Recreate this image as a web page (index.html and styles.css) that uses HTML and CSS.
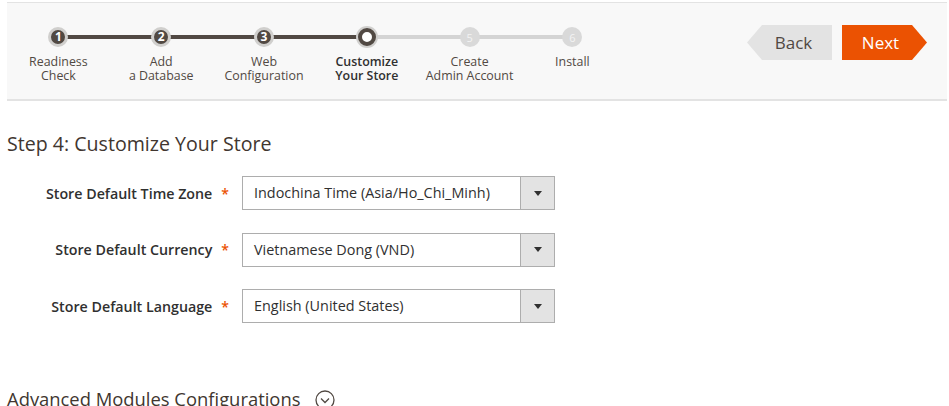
FILE: index.html
```html
<!DOCTYPE html>
<html lang="en">
<head>
<meta charset="utf-8">
<title>Step 4: Customize Your Store</title>
<link rel="stylesheet" href="styles.css">
</head>
<body>
<div class="page">
  <header class="nav-bar">
    <ol class="steps">
      <li class="step done"><span class="dot">1</span><span class="label">Readiness<br>Check</span></li>
      <li class="step done"><span class="dot">2</span><span class="label">Add<br>a Database</span></li>
      <li class="step done"><span class="dot">3</span><span class="label">Web<br>Configuration</span></li>
      <li class="step active"><span class="dot"></span><span class="label">Customize<br>Your Store</span></li>
      <li class="step todo"><span class="dot">5</span><span class="label">Create<br>Admin Account</span></li>
      <li class="step todo"><span class="dot">6</span><span class="label">Install</span></li>
    </ol>
    <div class="buttons">
      <button class="btn btn-back">Back</button>
      <button class="btn btn-next">Next</button>
    </div>
  </header>

  <h2 class="title">Step 4: Customize Your Store</h2>

  <form class="form">
    <div class="row">
      <label class="field-label">Store Default Time Zone<span class="req">*</span></label>
      <div class="select"><span class="value">Indochina Time (Asia/Ho_Chi_Minh)</span><span class="arrow"></span></div>
    </div>
    <div class="row">
      <label class="field-label">Store Default Currency<span class="req">*</span></label>
      <div class="select"><span class="value">Vietnamese Dong (VND)</span><span class="arrow"></span></div>
    </div>
    <div class="row">
      <label class="field-label">Store Default Language<span class="req">*</span></label>
      <div class="select"><span class="value">English (United States)</span><span class="arrow"></span></div>
    </div>
  </form>

  <h2 class="title advanced">Advanced Modules Configurations
    <svg class="chev" width="22" height="22" viewBox="0 0 22 22"><circle cx="11" cy="11" r="9" fill="none" stroke="#514943" stroke-width="1.3"/><path d="M7 9.5 L11 13.5 L15 9.5" fill="none" stroke="#514943" stroke-width="1.3"/></svg>
  </h2>
</div>
</body>
</html>
```

FILE: styles.css
```css
html, body {
  margin: 0;
  padding: 0;
  background: #ffffff;
}
body {
  font-family: "Open Sans", "Liberation Sans", sans-serif;
  color: #303030;
  overflow: hidden;
}
.page {
  padding: 2px 2px 0 7px;
}
.nav-bar {
  display: flex;
  justify-content: space-between;
  align-items: flex-start;
  background: #f8f8f8;
  border-top: 1px solid #e3e3e3;
  border-bottom: 2px solid #e3e3e3;
  height: 96px;
  box-sizing: content-box;
}
.steps {
  list-style: none;
  margin: 0;
  padding: 24px 0 0 0;
  display: flex;
}
.step {
  width: 102.8px;
  position: relative;
  display: flex;
  flex-direction: column;
  align-items: center;
}
.step::after {
  content: "";
  position: absolute;
  top: 8px;
  left: 50%;
  width: 100%;
  height: 4px;
  background: #d4d4d4;
  z-index: 0;
}
.step:last-child::after { display: none; }
.step.done::after { background: #514943; }
.dot {
  position: relative;
  z-index: 1;
  width: 20px;
  height: 20px;
  border-radius: 50%;
  box-sizing: border-box;
  display: flex;
  align-items: center;
  justify-content: center;
  font-size: 12px;
  font-weight: 700;
  line-height: 1;
}
.done .dot {
  background: #514943;
  border: 3px solid #d0cfcd;
  color: #ffffff;
}
.active .dot {
  background: #ffffff;
  border: 4px solid #514943;
  box-shadow: 0 0 0 2px #d0cfcd;
  width: 18px;
  height: 18px;
  margin: 1px 0;
}
.todo .dot {
  background: #d9d9d9;
  color: #f3f3f3;
  font-weight: 400;
  font-size: 11px;
}
.label {
  margin-top: 8px;
  font-size: 12.4px;
  line-height: 14px;
  text-align: center;
  color: #514943;
  white-space: nowrap;
}
.active .label {
  font-weight: 600;
  color: #303030;
}
.buttons {
  display: flex;
  gap: 10px;
  padding: 22px 20px 0 0;
}
.btn {
  border: 0;
  margin: 0;
  height: 35px;
  font-family: "Open Sans", "Liberation Sans", sans-serif;
  font-size: 17px;
  line-height: 35px;
  cursor: pointer;
}
.btn-back {
  width: 85px;
  padding: 0 0 0 8px;
  background: #e3e3e3;
  color: #514943;
  clip-path: polygon(15px 0, 100% 0, 100% 100%, 15px 100%, 0 50%);
}
.btn-next {
  width: 85px;
  padding: 0 8px 0 0;
  background: #eb5202;
  color: #ffffff;
  clip-path: polygon(0 0, 70px 0, 100% 50%, 70px 100%, 0 100%);
}
.title {
  margin: 29px 0 18px 0;
  font-size: 19.6px;
  line-height: 28px;
  font-weight: 400;
  color: #41362f;
}
.form {
  display: flex;
  flex-direction: column;
  gap: 22.5px;
}
.row {
  display: grid;
  grid-template-columns: 235px 313px;
  align-items: center;
}
.field-label {
  text-align: right;
  padding-right: 13px;
  font-size: 14.25px;
  font-weight: 600;
  color: #303030;
  white-space: nowrap;
}
.req {
  color: #eb5202;
  margin-left: 9px;
  font-size: 14px;
}
.select {
  display: flex;
  height: 34px;
  box-sizing: border-box;
  border: 1px solid #adadad;
  background: #ffffff;
}
.value {
  flex: 1;
  padding-left: 11px;
  font-size: 14.4px;
  line-height: 32px;
  color: #303030;
  white-space: nowrap;
}
.arrow {
  width: 33px;
  border-left: 1px solid #adadad;
  background: #e3e3e3;
  display: flex;
  align-items: center;
  justify-content: center;
}
.arrow::before {
  content: "";
  border-left: 4px solid transparent;
  border-right: 4px solid transparent;
  border-top: 5px solid #303030;
}
.title.advanced {
  margin-top: 62px;
  font-size: 18.4px;
  display: flex;
  align-items: center;
  gap: 14px;
}
.chev {
  margin-top: 2px;
}
```
